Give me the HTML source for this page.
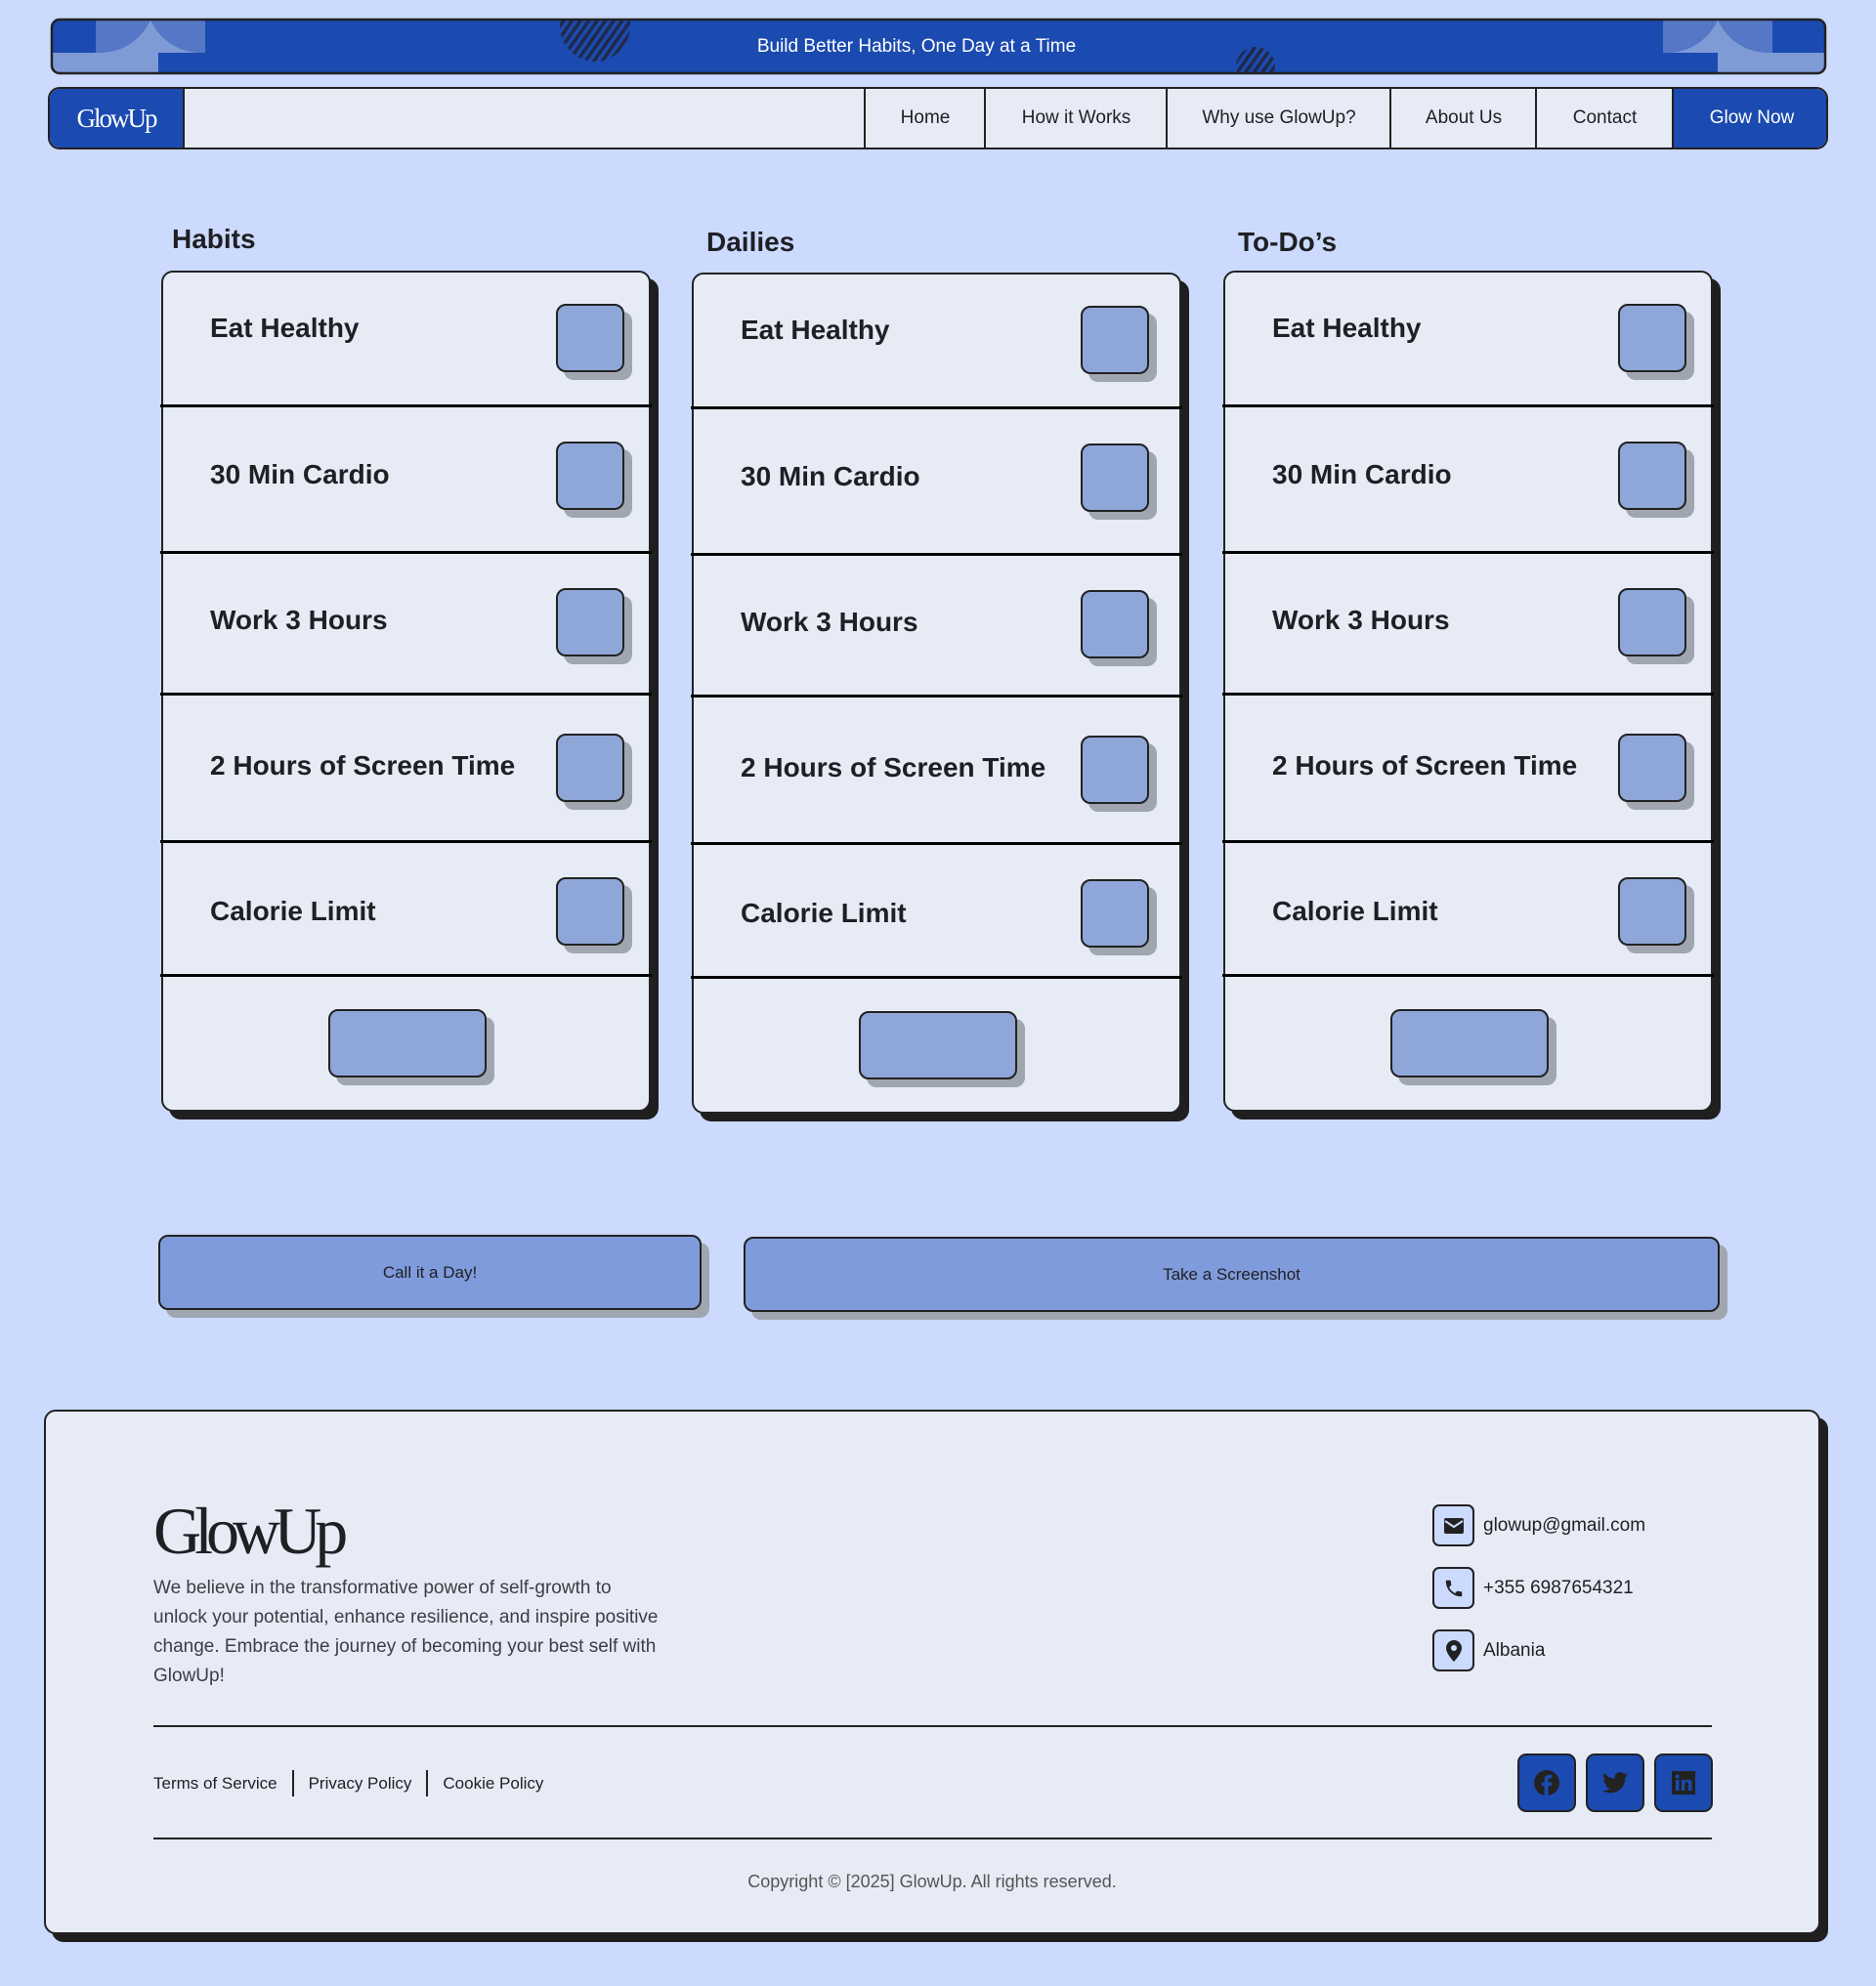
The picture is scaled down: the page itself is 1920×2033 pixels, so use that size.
<!DOCTYPE html>
<html><head><meta charset="utf-8"><style>
*{box-sizing:border-box;margin:0;padding:0}
body{width:1920px;height:2033px;background:#cbdafd;font-family:"Liberation Sans",sans-serif;position:relative;overflow:hidden;color:#1f1f24}
.abs{position:absolute}
.nav{left:49px;top:89px;width:1822px;height:64px;border:2px solid #222;border-radius:12px;background:#e6ebf6;overflow:hidden}
.nav .it{position:absolute;top:0;height:100%;border-left:2px solid #222;display:flex;align-items:center;justify-content:center;font-size:19px}
.h{font-size:28px;font-weight:bold}
.card{width:501px;height:861px;background:#e6ebf6;border:2px solid #222;border-radius:12px;box-shadow:8px 8px 0 #1f1f1f}
.card .dv{position:absolute;left:-3px;right:-3px;height:3px;background:#000}
.card .t{position:absolute;left:48px;font-size:28px;font-weight:bold;transform:translateY(-50%);white-space:nowrap}
.cb{position:absolute;left:402px;width:70px;height:70px;background:#8ea6d8;border:2px solid #222;border-radius:10px;box-shadow:8px 8px 0 #a0a6b0}
.bb{position:absolute;left:169px;top:754px;width:162px;height:70px;background:#8ea6d8;border:2px solid #222;border-radius:10px;box-shadow:8px 8px 0 #a0a6b0}
.btn{background:#7f9bdb;border:2px solid #222;border-radius:10px;box-shadow:8px 8px 0 #a0a6b0;display:flex;align-items:center;justify-content:center;font-size:17px}
.foot{left:45px;top:1443px;width:1818px;height:537px;background:#e6ebf6;border:2px solid #222;border-radius:12px;box-shadow:8px 8px 0 #1f1f1f}
.ic{width:43px;height:43px;border:2px solid #222;border-radius:7px;background:#cbdafd;display:flex;align-items:center;justify-content:center}
.so{width:60px;height:60px;border:2px solid #222;border-radius:9px;background:#1b4ab0;display:flex;align-items:center;justify-content:center}
</style></head><body>

<svg class="abs" style="left:0;top:0" width="1920" height="80">
<defs><clipPath id="c"><rect x="53" y="20" width="1815" height="55" rx="8"/></clipPath></defs>
<rect x="53" y="20" width="1815" height="55" rx="8" fill="#1b4ab0"/>
<g clip-path="url(#c)">
<rect x="52" y="54" width="110" height="22" fill="#7f9bd6"/>
<rect x="98" y="18" width="112" height="36" fill="#7f9bd6"/>
<path d="M98 18 H155 A57 57 0 0 1 98 54 Z" fill="#5577c5"/>
<path d="M210 18 H153 A57 57 0 0 0 210 54 Z" fill="#5577c5"/>
<circle cx="212" cy="110" r="56" fill="#1b4ab0"/>
<rect x="1702" y="18" width="112" height="36" fill="#7f9bd6"/>
<path d="M1702 18 H1759 A57 57 0 0 1 1702 54 Z" fill="#5577c5"/>
<path d="M1814 18 H1757 A57 57 0 0 0 1814 54 Z" fill="#5577c5"/>
<rect x="1758" y="54" width="112" height="22" fill="#7f9bd6"/>
<circle cx="1700" cy="110" r="56" fill="#1b4ab0"/>
<defs><pattern id="st" width="7" height="7" patternUnits="userSpaceOnUse" patternTransform="rotate(35)"><rect width="7" height="7" fill="#1b4ab0"/><rect width="3.5" height="7" fill="#1f2a4a"/></pattern></defs>
<ellipse cx="609" cy="26" rx="36" ry="37" fill="url(#st)"/>
<ellipse cx="1285" cy="68" rx="20" ry="20" fill="url(#st)"/>
</g>
<rect x="53" y="20" width="1815" height="55" rx="8" fill="none" stroke="#222" stroke-width="2.5"/>
<text x="938" y="53" fill="#fff" font-family="Liberation Sans" font-size="19" text-anchor="middle">Build Better Habits, One Day at a Time</text>
</svg>

<div class="abs nav">
 <div class="it" style="left:0;width:138px;border-left:none;background:#1b4ab0;color:#fff;font-family:'Liberation Serif',serif;font-size:27px;letter-spacing:-2px;border-right:2px solid #222">GlowUp</div>
 <div class="it" style="left:833px;width:124px">Home</div>
 <div class="it" style="left:956px;width:187px">How it Works</div>
 <div class="it" style="left:1142px;width:230px">Why use GlowUp?</div>
 <div class="it" style="left:1371px;width:150px">About Us</div>
 <div class="it" style="left:1520px;width:141px">Contact</div>
 <div class="it" style="left:1660px;width:162px;background:#1b4ab0;color:#fff">Glow Now</div>
</div>

<div class="abs h" style="left:176px;top:229px">Habits</div>
<div class="abs h" style="left:723px;top:232px">Dailies</div>
<div class="abs h" style="left:1267px;top:232px">To-Do’s</div>

<div class="abs card" style="left:165px;top:277px">
 <div class="dv" style="top:135px"></div><div class="dv" style="top:285px"></div><div class="dv" style="top:430px"></div><div class="dv" style="top:581px"></div><div class="dv" style="top:718px"></div>
 <div class="t" style="top:57px">Eat Healthy</div><div class="t" style="top:207px">30 Min Cardio</div><div class="t" style="top:356px">Work 3 Hours</div><div class="t" style="top:505px">2 Hours of Screen Time</div><div class="t" style="top:654px">Calorie Limit</div>
 <div class="cb" style="top:32px"></div><div class="cb" style="top:173px"></div><div class="cb" style="top:323px"></div><div class="cb" style="top:472px"></div><div class="cb" style="top:619px"></div>
 <div class="bb"></div>
</div>
<div class="abs card" style="left:708px;top:279px">
 <div class="dv" style="top:135px"></div><div class="dv" style="top:285px"></div><div class="dv" style="top:430px"></div><div class="dv" style="top:581px"></div><div class="dv" style="top:718px"></div>
 <div class="t" style="top:57px">Eat Healthy</div><div class="t" style="top:207px">30 Min Cardio</div><div class="t" style="top:356px">Work 3 Hours</div><div class="t" style="top:505px">2 Hours of Screen Time</div><div class="t" style="top:654px">Calorie Limit</div>
 <div class="cb" style="top:32px;left:396px"></div><div class="cb" style="top:173px;left:396px"></div><div class="cb" style="top:323px;left:396px"></div><div class="cb" style="top:472px;left:396px"></div><div class="cb" style="top:619px;left:396px"></div>
 <div class="bb"></div>
</div>
<div class="abs card" style="left:1252px;top:277px">
 <div class="dv" style="top:135px"></div><div class="dv" style="top:285px"></div><div class="dv" style="top:430px"></div><div class="dv" style="top:581px"></div><div class="dv" style="top:718px"></div>
 <div class="t" style="top:57px">Eat Healthy</div><div class="t" style="top:207px">30 Min Cardio</div><div class="t" style="top:356px">Work 3 Hours</div><div class="t" style="top:505px">2 Hours of Screen Time</div><div class="t" style="top:654px">Calorie Limit</div>
 <div class="cb" style="top:32px"></div><div class="cb" style="top:173px"></div><div class="cb" style="top:323px"></div><div class="cb" style="top:472px"></div><div class="cb" style="top:619px"></div>
 <div class="bb"></div>
</div>

<div class="abs btn" style="left:162px;top:1264px;width:556px;height:77px">Call it a Day!</div>
<div class="abs btn" style="left:761px;top:1266px;width:999px;height:77px">Take a Screenshot</div>

<div class="abs foot">
 <div class="abs" style="left:110px;top:88px;font-family:'Liberation Serif',serif;font-size:68px;letter-spacing:-7px;line-height:1">GlowUp</div>
 <div class="abs" style="left:110px;top:166px;width:520px;font-size:19px;line-height:30px;color:#3d3d45">We believe in the transformative power of self-growth to unlock your potential, enhance resilience, and inspire positive change. Embrace the journey of becoming your best self with GlowUp!</div>
 <div class="abs" style="left:1419px;top:95px;display:flex;flex-direction:column;gap:21px">
  <div style="display:flex;align-items:center;gap:9px;font-size:19px"><div class="ic"><svg width="20" height="16" viewBox="0 0 20 16"><rect width="20" height="16" rx="2" fill="#222"/><path d="M1 3 L10 9 L19 3" stroke="#cbdafd" stroke-width="2" fill="none"/></svg></div>glowup@gmail.com</div>
  <div style="display:flex;align-items:center;gap:9px;font-size:19px"><div class="ic"><svg width="22" height="22" viewBox="0 0 24 24"><path d="M6.6 10.8a15 15 0 006.6 6.6l2.2-2.2a1 1 0 011-.25 11.4 11.4 0 003.6.57 1 1 0 011 1V20a1 1 0 01-1 1A17 17 0 013 4a1 1 0 011-1h3.5a1 1 0 011 1c0 1.25.2 2.45.57 3.57a1 1 0 01-.25 1z" fill="#222"/></svg></div>+355 6987654321</div>
  <div style="display:flex;align-items:center;gap:9px;font-size:19px"><div class="ic"><svg width="16" height="22" viewBox="0 0 16 22"><path d="M8 0a8 8 0 00-8 8c0 6 8 14 8 14s8-8 8-14a8 8 0 00-8-8z" fill="#222"/><circle cx="8" cy="8" r="3" fill="#cbdafd"/></svg></div>Albania</div>
 </div>
 <div class="abs" style="left:110px;top:321px;width:1595px;height:2px;background:#222"></div>
 <div class="abs" style="left:110px;top:367px;display:flex;align-items:center;font-size:17px">Terms of Service<span style="width:2px;height:27px;background:#222;margin:0 15px"></span>Privacy Policy<span style="width:2px;height:27px;background:#222;margin:0 15px"></span>Cookie Policy</div>
 <div class="abs" style="left:1506px;top:350px;display:flex;gap:10px">
  <div class="so"><svg width="26" height="26" viewBox="0 0 24 24"><circle cx="12" cy="12" r="12" fill="#222"/><path d="M13.5 24v-9h3l.5-3.5h-3.5V9.3c0-1 .3-1.7 1.8-1.7H17V4.5a25 25 0 00-2.7-.1c-2.7 0-4.5 1.6-4.5 4.6v2.6H7V15h2.8v9z" fill="#1b4ab0"/></svg></div>
  <div class="so"><svg width="26" height="22" viewBox="0 0 24 20"><path d="M24 2.4a10 10 0 01-2.8.8A5 5 0 0023.3.4a10 10 0 01-3.1 1.2A4.9 4.9 0 0011.8 6 14 14 0 011.7.9a4.9 4.9 0 001.5 6.6 4.9 4.9 0 01-2.2-.6 4.9 4.9 0 003.9 4.9 5 5 0 01-2.2.1 4.9 4.9 0 004.6 3.4A9.9 9.9 0 010 17.3 14 14 0 007.5 19.5c9.1 0 14-7.5 14-14v-.6A10 10 0 0024 2.4z" fill="#222"/></svg></div>
  <div class="so"><svg width="24" height="24" viewBox="0 0 24 24"><rect width="24" height="24" fill="#222"/><rect x="4" y="9" width="3.5" height="11" fill="#1b4ab0"/><circle cx="5.7" cy="5.5" r="2" fill="#1b4ab0"/><path d="M10 9h3.3v1.6c.6-1 1.8-1.9 3.6-1.9 3 0 3.6 2 3.6 4.6V20H17v-5.8c0-1.4 0-3-1.8-3s-2.1 1.4-2.1 2.9V20H10z" fill="#1b4ab0"/></svg></div>
 </div>
 <div class="abs" style="left:110px;top:436px;width:1595px;height:2px;background:#222"></div>
 <div class="abs" style="left:0;width:100%;top:471px;text-align:center;font-size:18px;color:#555">Copyright © [2025] GlowUp. All rights reserved.</div>
</div>
</body></html>
